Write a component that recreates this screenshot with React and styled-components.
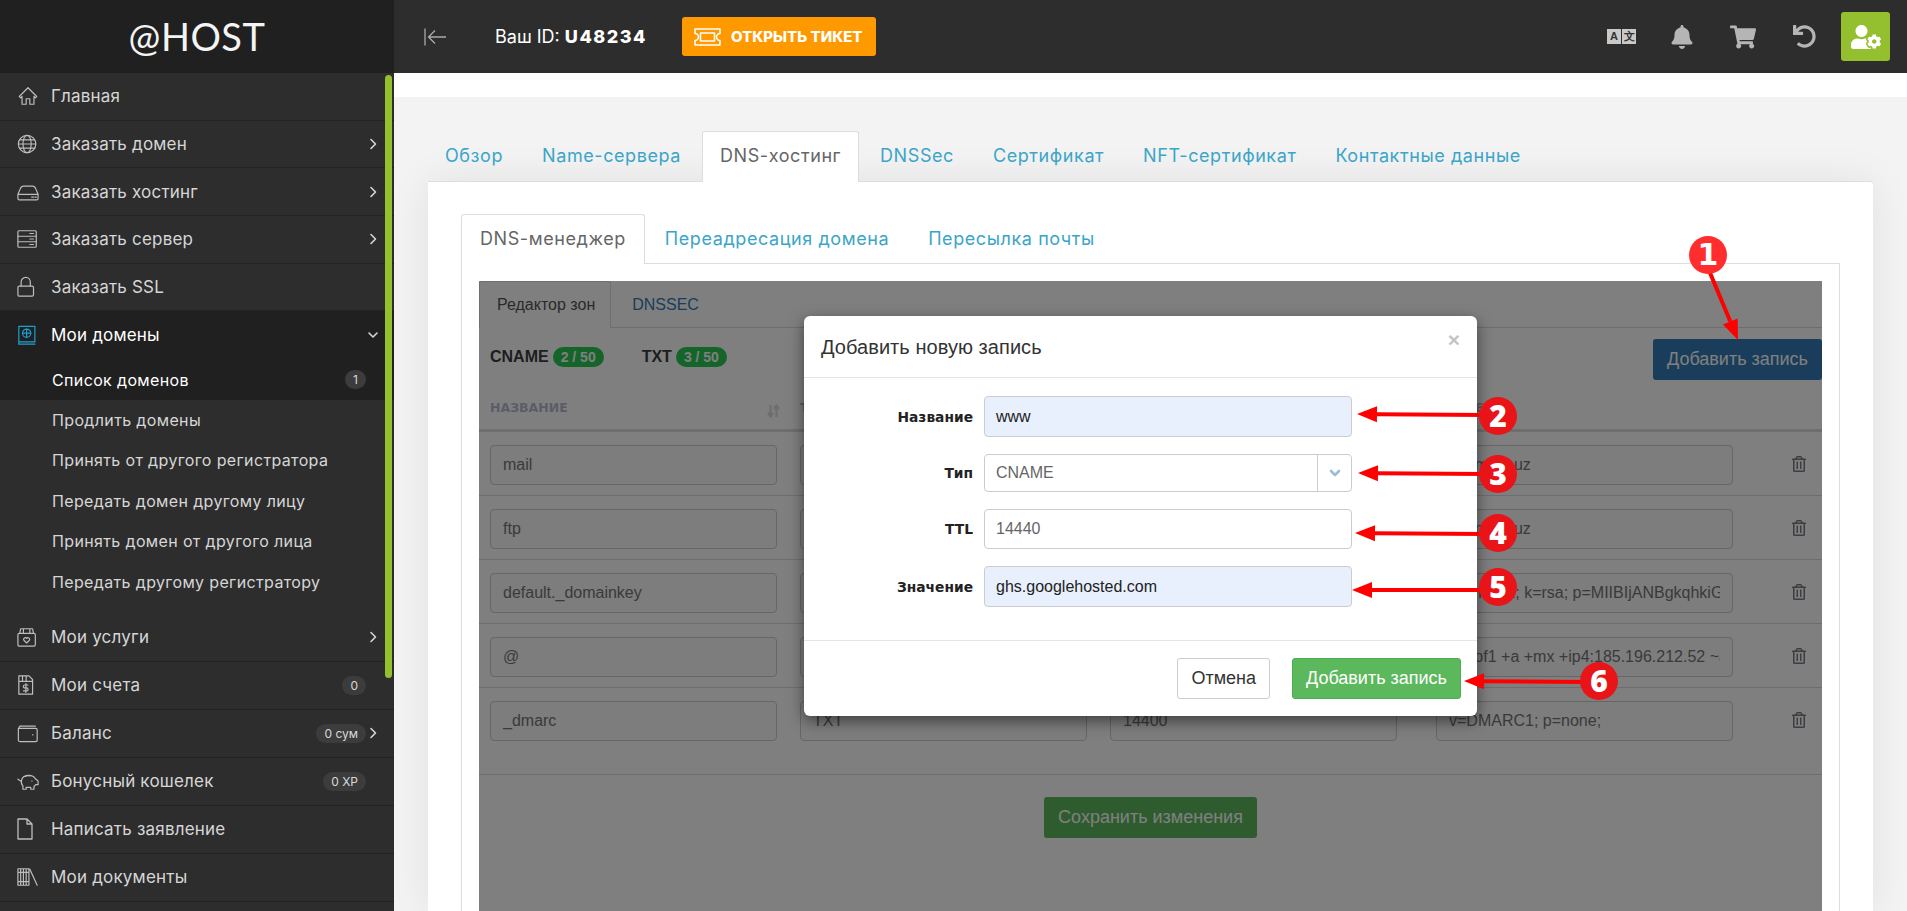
import React from "react";
import styled, { createGlobalStyle } from "styled-components";
import { FaBell, FaShoppingCart, FaUndo, FaUserCog, FaRegTrashAlt } from "react-icons/fa";

const MENU_FONT = `"Inter", "Noto Sans", sans-serif`;
const FORM_FONT = `"Liberation Sans", Arial, sans-serif`;

const Global = createGlobalStyle`
  html, body { margin: 0; padding: 0; height: 100%; overflow: hidden; }
  * { box-sizing: border-box; }
  body { font-family: ${FORM_FONT}; background: #fff; }
`;

const Page = styled.div`
  position: relative;
  display: flex;
  width: 100%;
  height: 911px;
  overflow: hidden;
`;

/* ---------- sidebar ---------- */
const Sidebar = styled.aside`
  position: relative;
  flex: 0 0 394px;
  background: #2d2d2d;
  font-family: ${MENU_FONT};
  overflow: hidden;
`;

const Logo = styled.div`
  height: 73px;
  background: #202020;
  color: #f4f4f4;
  display: flex;
  align-items: center;
  justify-content: center;
  font-family: "Lato", sans-serif;
  font-size: 38px;
  letter-spacing: 0.5px;
  padding-bottom: 1px;
`;

const ScrollThumb = styled.div`
  position: absolute;
  left: 385px;
  top: 75px;
  width: 7px;
  height: 603px;
  border-radius: 4px;
  background: #94bf2f;
`;

const Item = styled.div`
  display: flex;
  align-items: center;
  height: ${p => p.$h || 48}px;
  padding: 0 14px 0 17px;
  color: ${p => (p.$active ? "#fff" : "#d6d6d6")};
  background: ${p => (p.$active ? "#202020" : "transparent")};
  border-bottom: 1px solid ${p => (p.$active ? "#202020" : "#222")};
  font-size: 17px;
  letter-spacing: 0.2px;
`;

const ItemIcon = styled.span`
  flex: 0 0 34px;
  display: flex;
  align-items: center;
  color: ${p => p.$color || "#bdbdbd"};
`;

const ItemLabel = styled.span`
  flex: 1;
  white-space: nowrap;
`;

const Count = styled.span`
  height: 19px;
  min-width: 21px;
  padding: 0 8px;
  border-radius: 10px;
  background: #3c3c3c;
  color: #d8d8d8;
  font-size: 12px;
  letter-spacing: 0;
  line-height: 19px;
  text-align: center;
  white-space: nowrap;
`;

const ChevronSlot = styled.span`
  flex: 0 0 14px;
  display: flex;
  justify-content: center;
  color: #d6d6d6;
`;

const SubGroup = styled.div`
  padding-bottom: 12px;
`;

const SubItem = styled.div`
  display: flex;
  align-items: center;
  height: 40.4px;
  padding: 0 14px 0 52px;
  color: ${p => (p.$active ? "#fff" : "#d6d6d6")};
  background: ${p => (p.$active ? "#202020" : "transparent")};
  font-size: 16px;
  letter-spacing: 0.36px;
  white-space: nowrap;
`;

/* ---------- top bar ---------- */
const Main = styled.main`
  flex: 1;
  min-width: 0;
  display: flex;
  flex-direction: column;
`;

const TopBar = styled.header`
  flex: 0 0 73px;
  background: #2d2d2d;
  display: flex;
  align-items: center;
  padding: 0 17px 0 30px;
  font-family: ${MENU_FONT};
  color: #fff;
`;

const Collapse = styled.span`
  display: flex;
  color: #aaa;
  margin-right: 48px;
`;

const UserId = styled.span`
  font-size: 18px;
  white-space: nowrap;
  margin-right: 35px;
  b {
    font-weight: 800;
    letter-spacing: 1.5px;
  }
`;

const TicketButton = styled.button`
  display: flex;
  align-items: center;
  gap: 10px;
  width: 194px;
  height: 39px;
  padding: 0 12px;
  border: 0;
  border-radius: 3px;
  background: #ff9900;
  color: #fff;
  font-family: ${MENU_FONT};
  font-size: 15px;
  font-weight: 800;
  white-space: nowrap;
`;

const TopActions = styled.div`
  margin-left: auto;
  display: flex;
  align-items: center;
  color: #b5b5b5;
`;

const TopIcon = styled.span`
  display: flex;
  justify-content: center;
  width: ${p => p.$w}px;
  margin-left: ${p => p.$ml}px;
`;

const Translate = styled.span`
  display: flex;
  gap: 1px;
`;

const TranslateCell = styled.span`
  width: 14px;
  height: 15px;
  background: #c9c9c9;
  color: #333;
  font: bold 11px/15px ${FORM_FONT};
  text-align: center;
`;

const UserButton = styled.button`
  display: flex;
  align-items: center;
  justify-content: center;
  width: 49px;
  height: 49px;
  margin-left: 24px;
  border: 0;
  border-radius: 3px;
  background: #94bf2f;
  color: #fff;
`;

/* ---------- content ---------- */
const Strip = styled.div`
  flex: 0 0 24px;
  background: #fff;
`;

const Content = styled.div`
  flex: 1;
  min-height: 0;
  background: #f3f3f3;
  padding: 34px 34px 0;
  display: flex;
  flex-direction: column;
  font-family: ${MENU_FONT};
`;

const Tabs = styled.div`
  display: flex;
  gap: ${p => p.$gap}px;
  height: ${p => p.$h}px;
  margin-left: ${p => p.$shift || 0}px;
  position: relative;
  z-index: 1;
`;

const Tab = styled.div`
  padding: 0 ${p => p.$px}px;
  height: ${p => p.$h + 1}px;
  line-height: ${p => p.$lh}px;
  font-size: 18px;
  letter-spacing: 0.58px;
  white-space: nowrap;
  border: 1px solid ${p => (p.$active ? "#ddd" : "transparent")};
  border-bottom: 0;
  border-radius: 3px 3px 0 0;
  background: ${p => (p.$active ? "#fff" : "transparent")};
  color: ${p => (p.$active ? "#666" : "#3ba5c8")};
`;

const Panel = styled.section`
  flex: 1;
  min-height: 0;
  display: flex;
  flex-direction: column;
  padding: 32px 33px 0 33px;
  background: #fff;
  border-top: 1px solid #ddd;
  border-radius: 0 3px 0 0;
  box-shadow: 0 0 40px rgba(0, 0, 0, 0.08);
`;

const InnerPanel = styled.div`
  flex: 1;
  min-height: 0;
  display: flex;
  padding: 17px 17px 0;
  border: 1px solid #ddd;
  border-bottom: 0;
`;

const DnsArea = styled.div`
  position: relative;
  flex: 1;
  min-width: 0;
  background: #fff;
  font-family: ${FORM_FONT};
  color: #757575;
`;

const Backdrop = styled.div`
  position: absolute;
  inset: 0;
  background: rgba(0, 0, 0, 0.5);
`;

const ZoneTabs = styled.div`
  display: flex;
  height: 47px;
  border-bottom: 1px solid #ddd;
`;

const ZoneTab = styled.div`
  height: 47px;
  padding: ${p => (p.$active ? "0 15px 0 17px" : "0 20px")};
  line-height: 45px;
  font-size: 16px;
  color: ${p => (p.$active ? "#555" : "#337ab7")};
  background: ${p => (p.$active ? "#fff" : "transparent")};
  border: 1px solid ${p => (p.$active ? "#ddd" : "transparent")};
  border-bottom: 0;
  border-radius: 3px 3px 0 0;
`;

const CounterRow = styled.div`
  display: flex;
  justify-content: space-between;
  align-items: flex-start;
  padding: 11px 0 0 11px;
`;

const Counters = styled.div`
  display: flex;
  align-items: center;
  gap: 38px;
  padding-top: 8px;
`;

const Counter = styled.span`
  display: flex;
  align-items: center;
  gap: 4px;
  font-size: 16px;
  font-weight: bold;
  color: #3c3c3c;
`;

const Pill = styled.span`
  width: 51px;
  height: 20px;
  border-radius: 10px;
  background: #2aca56;
  color: #fff;
  font-size: 14px;
  line-height: 20px;
  text-align: center;
`;

const Button = styled.button`
  height: 41px;
  padding: 0 13px;
  border: 1px solid ${p => p.$border || "transparent"};
  border-radius: 3px;
  background: ${p => p.$bg || "#fff"};
  color: ${p => p.$color || "#fff"};
  font: 18px ${FORM_FONT};
  white-space: nowrap;
`;

const HeadRow = styled.div`
  display: grid;
  grid-template-columns: 287px 287px 287px 313px;
  column-gap: 23px;
  align-items: center;
  height: 52px;
  padding: 6px 11px 0;
  border-bottom: 3px solid #ddd;
  font-family: "DejaVu Sans", sans-serif;
  font-size: 12.5px;
  font-weight: bold;
  color: #b5bbcc;
`;

const HeadCell = styled.span`
  display: flex;
  justify-content: space-between;
  align-items: center;
  padding-left: ${p => (p.$value ? "16px" : "0")};
  svg {
    color: #dcdcdc;
    margin: 7px -3px 0 0;
  }
`;

const TableRow = styled.div`
  display: grid;
  grid-template-columns: 287px 287px 287px 313px 1fr;
  column-gap: 23px;
  align-items: start;
  height: ${p => p.$h || 64}px;
  padding: 13px 15px 0 11px;
  border-bottom: 1px solid #ddd;
`;

const ValueCell = styled.div`
  padding-left: 16px;
`;

const TextBox = styled.input`
  display: block;
  width: 100%;
  height: 40px;
  padding: 0 12px;
  border: 1px solid #ccc;
  border-radius: 4px;
  background: #fafafa;
  color: #757575;
  font: 16px ${FORM_FONT};
  outline: none;
`;

const TrashSlot = styled.span`
  justify-self: end;
  padding-top: 11px;
  color: #7c7c84;
  display: flex;
`;

const SaveRow = styled.div`
  display: flex;
  justify-content: center;
  padding-top: 22px;
`;

/* ---------- modal ---------- */
const Modal = styled.div`
  position: absolute;
  left: 325px;
  top: 35px;
  width: 673px;
  height: 400px;
  display: flex;
  flex-direction: column;
  background: #fff;
  border-radius: 6px;
  box-shadow: 0 5px 15px rgba(0, 0, 0, 0.5);
  color: #333;
`;

const ModalHead = styled.div`
  flex: 0 0 62px;
  display: flex;
  align-items: center;
  justify-content: space-between;
  padding: 1px 17px 0;
  border-bottom: 1px solid #e5e5e5;
`;

const ModalTitle = styled.h4`
  margin: 0;
  font-size: 20px;
  font-weight: 400;
  letter-spacing: 0.05px;
  color: #333;
`;

const Close = styled.span`
  font-size: 21px;
  font-weight: bold;
  color: #c4c4c4;
  margin: -14px 0 0;
`;

const ModalBody = styled.div`
  flex: 1;
  display: flex;
  flex-direction: column;
  gap: 17px;
  padding: 18px 0 0;
`;

const Field = styled.div`
  display: flex;
  align-items: center;
  height: ${p => p.$h}px;
`;

const FieldLabel = styled.label`
  flex: 0 0 169px;
  text-align: right;
  font-family: "DejaVu Sans", sans-serif;
  font-size: 13.8px;
  font-weight: bold;
  color: #222;
`;

const FieldBox = styled.div`
  display: flex;
  align-items: center;
  width: 368px;
  height: 100%;
  margin-left: 11px;
  padding-left: 11px;
  border: 1px solid #ccc;
  border-radius: 4px;
  background: ${p => (p.$filled ? "#e8f0fe" : "#fff")};
  color: ${p => (p.$filled ? "#222" : "#666")};
  font-size: 16px;
`;

const SelectValue = styled.span`
  flex: 1;
`;

const SelectCaret = styled.span`
  flex: 0 0 34px;
  align-self: stretch;
  display: flex;
  align-items: center;
  justify-content: center;
  border-left: 1px solid #ccc;
  color: #9dbcd6;
`;

const ModalFoot = styled.div`
  flex: 0 0 76px;
  display: flex;
  justify-content: flex-end;
  gap: 22px;
  padding: 17px 16px 0 0;
  border-top: 1px solid #e5e5e5;
`;

/* ---------- callouts over the page ---------- */
const Arrows = styled.svg`
  position: absolute;
  inset: 0;
  width: 100%;
  height: 100%;
  pointer-events: none;
`;

const Badge = styled.span`
  position: absolute;
  left: ${p => p.$x - 19}px;
  top: ${p => p.$y - 19}px;
  width: 38px;
  height: 38px;
  border-radius: 50%;
  background: ${p => p.$bg || "#e81418"};
  color: #fff;
  font-family: ${p => (p.$slab ? `"DejaVu Sans"` : `"Open Sans"`)}, sans-serif;
  font-size: 30px;
  font-weight: 800;
  line-height: 37px;
  text-align: center;
`;

/* ---------- icons ---------- */
const Line = ({ children, w = 22, h = 22, vb = "0 0 24 24", sw = 1.3 }) => (
  <svg width={w} height={h} viewBox={vb} fill="none" stroke="currentColor" strokeWidth={sw} strokeLinecap="round" strokeLinejoin="round">
    {children}
  </svg>
);

const icons = {
  home: <Line><path d="M2.500 12.500 12 3l9.500 9.500-1.500 1.500-1.500-1.500V21H14v-6h-4v6H5.500v-8.500L4 14z" /></Line>,
  globe: <Line><circle cx="11" cy="12" r="9.5" /><ellipse cx="11" cy="12" rx="4.5" ry="9.5" /><path d="M1.5 12h19M2.800 7.500h16.400M2.800 16.500h16.400" /></Line>,
  hosting: <Line><path d="M1 14.500 4 7.500Q5 5.500 7 5.500h10q2 0 3 2l3 7M1 14.500h22V19q0 1.500-1.500 1.500h-19Q1 20.500 1 19zM16 17.500h2M19.500 17.500h1.500" /></Line>,
  server: <Line><rect x="1" y="3" width="20" height="18" rx="1" /><path d="M1 9h20M1 15h20M14 6h4M14 12h4M14 18h4" /></Line>,
  lock: <Line><rect x="1" y="11" width="17" height="11" rx="1.500" /><path d="M4.500 11V6.500a5 5 0 0 1 10 0V11" /></Line>,
  book: <Line><path d="M2 2.500h17.500v17H2zM2 19.500V22h17.500" /><circle cx="10.500" cy="10" r="4.500" /><path d="M6 10h9M10.500 5.500v9" /></Line>,
  services: <Line><rect x="1" y="8" width="19" height="14" rx="1.500" /><path d="M3 8l1-5h13l1 5M7 8V3M14 8V3" /><path d="M10.500 18.500l-3-3a1.800 1.800 0 0 1 3-2 1.800 1.800 0 0 1 3 2z" /></Line>,
  invoice: <Line><path d="M2 2h11l4 4v16H2zM2 8h15M6 2v6M10 2v6" /><path d="M12 12H8.500a1.500 1.500 0 0 0 0 3.200h2a1.500 1.500 0 0 1 0 3.200H7M9.700 10.500v9.500" /></Line>,
  wallet: <Line><path d="M3 4.500h17M2 7a2.500 2.500 0 0 1 2-2.500M1.500 7h19a1.500 1.500 0 0 1 1.500 1.500V20a1.500 1.500 0 0 1-1.500 1.500h-17A2 2 0 0 1 1.500 19.500zM17 14h.5" /></Line>,
  piggy: <Line><path d="M5 11a8 6.500 0 0 1 15-1.500l3 2.500v4h-2.500l-2 2v3h-3.500v-2h-5v2H6.500v-3.500A7 7 0 0 1 5 11zM1 10l3 2M16 12h.5M9 7c1.500-1 3.500-1 5-.5" /></Line>,
  file: <Line w={16} h={22} vb="0 0 16 22"><path d="M1 1h9l5 5v15H1zM10 1v5h5" /></Line>,
  library: <Line><path d="M1 3h6v18H1zM7 3h6v18H7zM1 7h12M1 17h12M4 3v18M10 3v18M14 3.500 22 21" /></Line>,
};

const Chevron = ({ down, sw = 1.6 }) => (
  <svg width="12" height="12" viewBox="0 0 12 12" fill="none" stroke="currentColor" strokeWidth={sw} strokeLinecap="round" strokeLinejoin="round">
    <path d={down ? "M2 4l4 4 4-4" : "M4 1.500 8.500 6 4 10.500"} />
  </svg>
);

const CollapseIcon = () => (
  <svg width="23" height="20" viewBox="0 0 23 20" fill="none" stroke="currentColor" strokeWidth="1.300">
    <path d="M1 1.500v17M22 10H5M11 3.500 4.500 10l6.500 6.500" />
  </svg>
);

const TicketIcon = () => (
  <svg width="27" height="18" viewBox="0 0 27 18" fill="none" stroke="currentColor" strokeWidth="1.600" strokeLinejoin="round">
    <path d="M1 1h25v4.500a3.500 3.500 0 0 0 0 7V17H1v-4.500a3.500 3.500 0 0 0 0-7z" />
    <rect x="6.500" y="5" width="14" height="8" />
  </svg>
);

const SortIcon = () => (
  <svg width="13" height="14" viewBox="0 0 13 14" fill="none" stroke="currentColor" strokeWidth="2.200">
    <path d="M3.500 1v11M1 9l2.500 3.500L6 9M9.500 13V2M7 5l2.500-3.500L12 5" />
  </svg>
);

const menuTop = [
  ["home", "Главная"],
  ["globe", "Заказать домен", true],
  ["hosting", "Заказать хостинг", true],
  ["server", "Заказать сервер", true],
  ["lock", "Заказать SSL"],
];

const domainLinks = [
  "Продлить домены",
  "Принять от другого регистратора",
  "Передать домен другому лицу",
  "Принять домен от другого лица",
  "Передать другому регистратору",
];

const menuBottom = [
  ["services", "Мои услуги", true],
  ["invoice", "Мои счета", false, "0"],
  ["wallet", "Баланс", true, "0 сум"],
  ["piggy", "Бонусный кошелек", false, "0 XP"],
  ["file", "Написать заявление"],
  ["library", "Мои документы"],
];

const outerTabs = ["Обзор", "Name-сервера", "DNS-хостинг", "DNSSec", "Сертификат", "NFT-сертификат", "Контактные данные"];
const innerTabs = ["DNS-менеджер", "Переадресация домена", "Пересылка почты"];

const MenuRow = ({ icon, label, arrow, count, h }) => (
  <Item $h={h}>
    <ItemIcon>{icons[icon]}</ItemIcon>
    <ItemLabel>{label}</ItemLabel>
    {count && <Count>{count}</Count>}
    <ChevronSlot>{arrow && <Chevron />}</ChevronSlot>
  </Item>
);

const records = [
  ["mail", "CNAME", "14400", "example.uz"],
  ["ftp", "CNAME", "14400", "example.uz"],
  ["default._domainkey", "TXT", "14400", "v=DKIM1; k=rsa; p=MIIBIjANBgkqhkiG9w0BAQ"],
  ["@", "TXT", "14400", "v=spf1 +a +mx +ip4:185.196.212.52 ~all"],
  ["_dmarc", "TXT", "14400", "v=DMARC1; p=none;"],
];

const callouts = [
  { n: 1, x: 1708, y: 255, bg: "#ff2d2d", slab: true },
  { n: 2, x: 1498, y: 416 },
  { n: 3, x: 1498, y: 474 },
  { n: 4, x: 1498, y: 533 },
  { n: 5, x: 1498, y: 587 },
  { n: 6, x: 1599, y: 681 },
];

const Arrow = ({ x1, y1, x2, y2 }) => {
  const a = Math.atan2(y2 - y1, x2 - x1);
  const px = x2 - Math.cos(a) * 20;
  const py = y2 - Math.sin(a) * 20;
  const nx = -Math.sin(a) * 8;
  const ny = Math.cos(a) * 8;
  return (
    <g fill="#f00" stroke="#f00">
      <line x1={x1} y1={y1} x2={px} y2={py} strokeWidth="4" />
      <polygon points={`${x2},${y2} ${px + nx},${py + ny} ${px - nx},${py - ny}`} strokeWidth="0" />
    </g>
  );
};

export default function App() {
  return (
    <Page>
      <Global />
      <Sidebar>
        <Logo>@HOST</Logo>
        {menuTop.map(([icon, label, arrow]) => (
          <MenuRow key={label} icon={icon} label={label} arrow={arrow} h={47.7} />
        ))}
        <Item $active>
          <ItemIcon $color="#1f9fd0">{icons.book}</ItemIcon>
          <ItemLabel>Мои домены</ItemLabel>
          <ChevronSlot><Chevron down /></ChevronSlot>
        </Item>
        <SubGroup>
          <SubItem $active>
            <ItemLabel>Список доменов</ItemLabel>
            <Count>1</Count>
            <ChevronSlot />
          </SubItem>
          {domainLinks.map(link => <SubItem key={link}>{link}</SubItem>)}
        </SubGroup>
        {menuBottom.map(([icon, label, arrow, count]) => (
          <MenuRow key={label} icon={icon} label={label} arrow={arrow} count={count} />
        ))}
        <ScrollThumb />
      </Sidebar>

      <Main>
        <TopBar>
          <Collapse><CollapseIcon /></Collapse>
          <UserId>Ваш ID: <b>U48234</b></UserId>
          <TicketButton><TicketIcon />ОТКРЫТЬ ТИКЕТ</TicketButton>
          <TopActions>
            <Translate>
              <TranslateCell>A</TranslateCell>
              <TranslateCell>文</TranslateCell>
            </Translate>
            <TopIcon $w={22} $ml={35}><FaBell size={24} /></TopIcon>
            <TopIcon $w={28} $ml={36}><FaShoppingCart size={26} /></TopIcon>
            <TopIcon $w={25} $ml={35}><FaUndo size={23} /></TopIcon>
            <UserButton><FaUserCog size={30} /></UserButton>
          </TopActions>
        </TopBar>
        <Strip />
        <Content>
          <Tabs $h={50} $gap={3} $shift={-1}>
            {outerTabs.map(t => (
              <Tab key={t} $h={50} $lh={47} $px={17} $active={t === "DNS-хостинг"}>{t}</Tab>
            ))}
          </Tabs>
          <Panel>
            <Tabs $h={49} $gap={1}>
              {innerTabs.map(t => (
                <Tab key={t} $h={49} $lh={48} $px={18} $active={t === "DNS-менеджер"}>{t}</Tab>
              ))}
            </Tabs>
            <InnerPanel>
              <DnsArea>
                <ZoneTabs>
                  <ZoneTab $active>Редактор зон</ZoneTab>
                  <ZoneTab>DNSSEC</ZoneTab>
                </ZoneTabs>
                <CounterRow>
                  <Counters>
                    <Counter>CNAME <Pill>2 / 50</Pill></Counter>
                    <Counter>TXT <Pill>3 / 50</Pill></Counter>
                  </Counters>
                  <Button $bg="#337ab7">Добавить запись</Button>
                </CounterRow>
                <HeadRow>
                  <HeadCell>НАЗВАНИЕ<SortIcon /></HeadCell>
                  <HeadCell>ТИП</HeadCell>
                  <HeadCell>TTL</HeadCell>
                  <HeadCell $value>ЗНАЧЕНИЕ</HeadCell>
                </HeadRow>
                {records.map(([name, type, ttl, value], i) => (
                  <TableRow key={name} $h={i === records.length - 1 ? 87 : 64}>
                    <TextBox readOnly value={name} />
                    <TextBox readOnly value={type} />
                    <TextBox readOnly value={ttl} />
                    <ValueCell><TextBox readOnly value={value} /></ValueCell>
                    <TrashSlot><FaRegTrashAlt size={16} /></TrashSlot>
                  </TableRow>
                ))}
                <SaveRow>
                  <Button $bg="#5cb85c">Сохранить изменения</Button>
                </SaveRow>
                <Backdrop />
                <Modal>
                  <ModalHead>
                    <ModalTitle>Добавить новую запись</ModalTitle>
                    <Close>×</Close>
                  </ModalHead>
                  <ModalBody>
                    <Field $h={41}>
                      <FieldLabel>Название</FieldLabel>
                      <FieldBox $filled>www</FieldBox>
                    </Field>
                    <Field $h={38}>
                      <FieldLabel>Тип</FieldLabel>
                      <FieldBox>
                        <SelectValue>CNAME</SelectValue>
                        <SelectCaret><Chevron down sw={2.6} /></SelectCaret>
                      </FieldBox>
                    </Field>
                    <Field $h={40}>
                      <FieldLabel>TTL</FieldLabel>
                      <FieldBox>14440</FieldBox>
                    </Field>
                    <Field $h={41}>
                      <FieldLabel>Значение</FieldLabel>
                      <FieldBox $filled>ghs.googlehosted.com</FieldBox>
                    </Field>
                  </ModalBody>
                  <ModalFoot>
                    <Button $color="#333" $border="#ccc">Отмена</Button>
                    <Button $bg="#5cb85c" $border="#4cae4c">Добавить запись</Button>
                  </ModalFoot>
                </Modal>
              </DnsArea>
            </InnerPanel>
          </Panel>
        </Content>
      </Main>

      <Arrows>
        <Arrow x1={1708} y1={268} x2={1738} y2={340} />
        <Arrow x1={1485} y1={415} x2={1357} y2={414} />
        <Arrow x1={1485} y1={474} x2={1358} y2={473} />
        <Arrow x1={1485} y1={534} x2={1355} y2={533} />
        <Arrow x1={1485} y1={590} x2={1352} y2={590} />
        <Arrow x1={1585} y1={682} x2={1464} y2={681} />
      </Arrows>
      {callouts.map(c => (
        <Badge key={c.n} $x={c.x} $y={c.y} $bg={c.bg} $slab={c.slab}>{c.n}</Badge>
      ))}
    </Page>
  );
}
